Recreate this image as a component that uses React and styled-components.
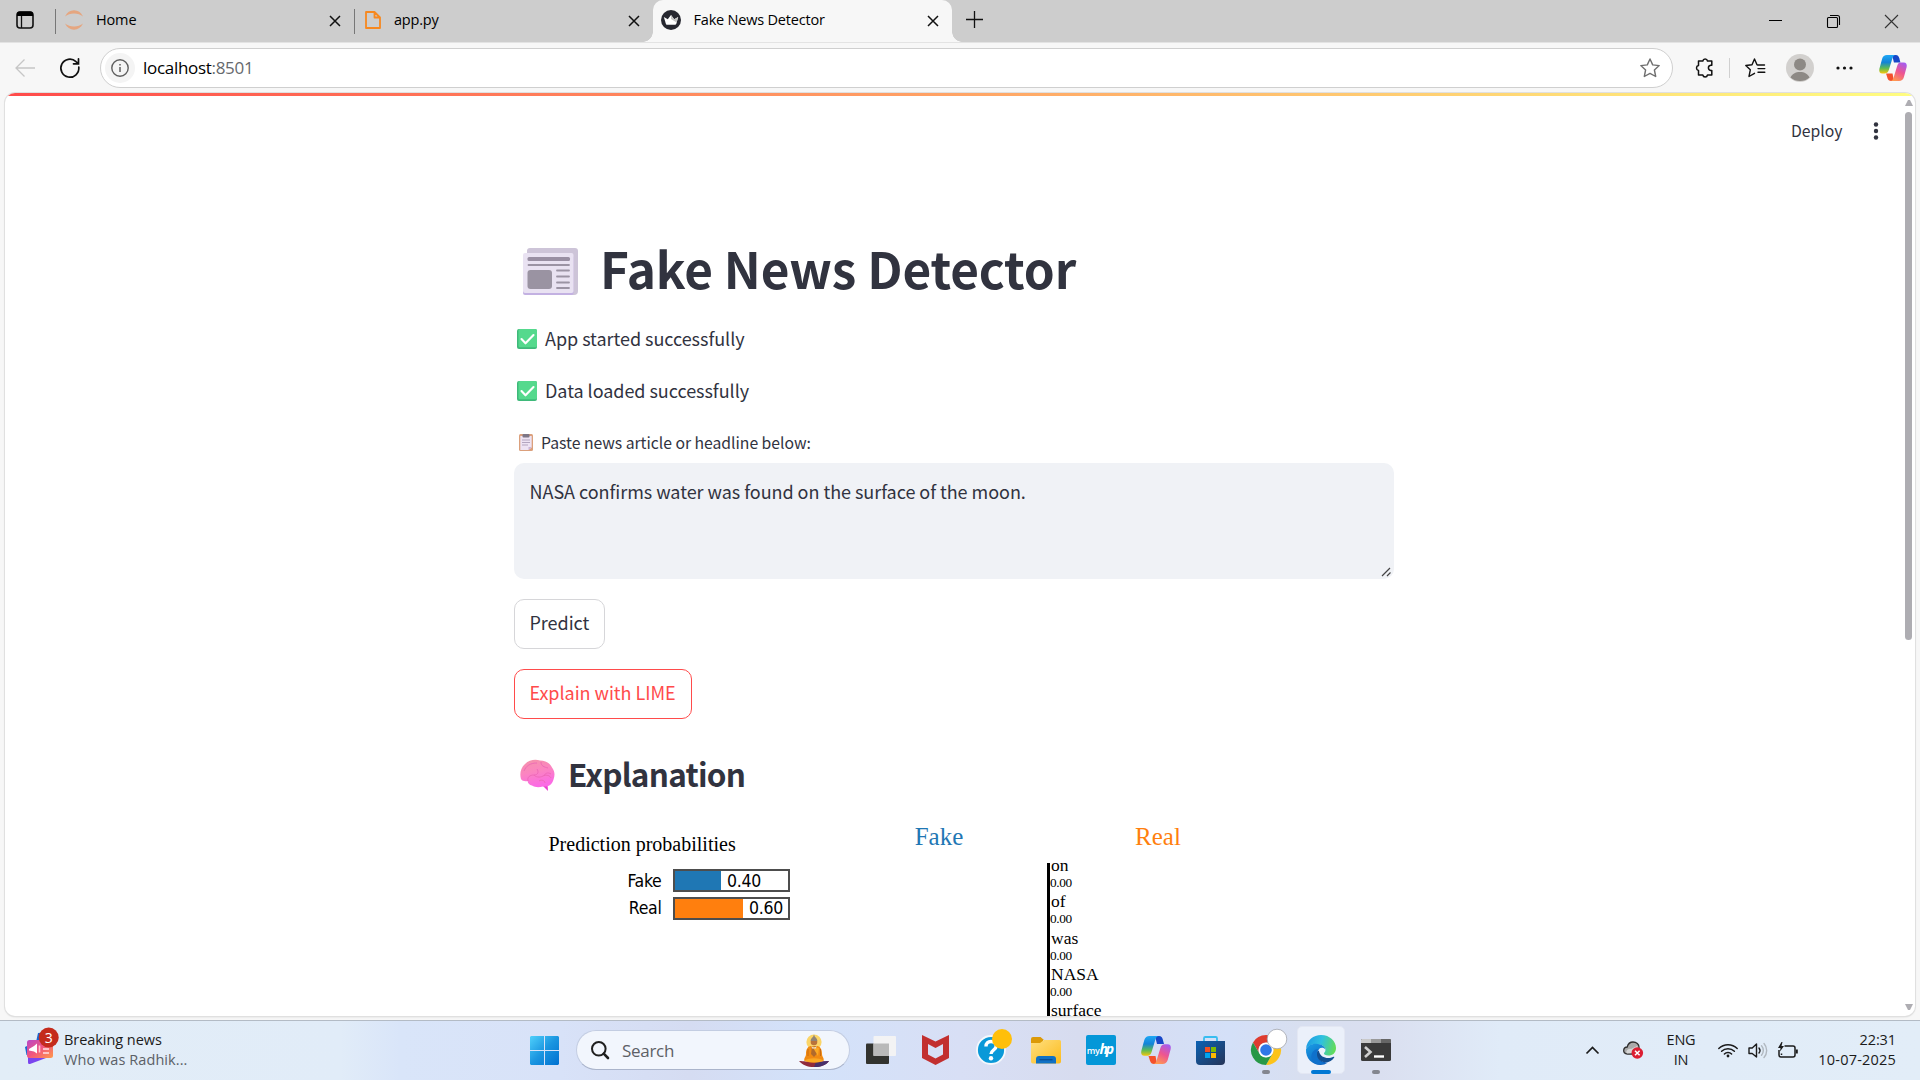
import React from "react";
import styled, { createGlobalStyle, css } from "styled-components";

const UI = `"Open Sans", "Noto Sans", sans-serif`;
const SOURCE = `"Noto Sans CJK SC", "Noto Sans", sans-serif`;
const TIMES = `"Liberation Serif", serif`;
const TAHOMA = `"DejaVu Sans Condensed", "DejaVu Sans", sans-serif`;

const Global = createGlobalStyle`
  * { box-sizing: border-box; }
  body { margin: 0; overflow: hidden; background: #f7f7f7; }
  svg { display: block; flex: none; overflow: visible; }
`;

const Screen = styled.div`
  width: 1920px;
  height: 1080px;
  display: flex;
  flex-direction: column;
  background: #f7f7f7;
  overflow: hidden;
`;

const Label = styled.span`
  font-family: ${UI};
  font-size: ${(p) => p.$size || 14.5}px;
  letter-spacing: ${(p) => p.$ls || 0}px;
  color: ${(p) => p.$color || "#000"};
  line-height: ${(p) => p.$lh || 20}px;
  white-space: nowrap;
`;

/* ---------- tab strip ---------- */
const TabStrip = styled.div`
  height: 42px;
  display: flex;
  background: #cdcdcd;
  padding-left: 16px;
`;
const TabMenu = styled.div`
  width: 40px;
  height: 40px;
  display: flex;
  align-items: center;
`;
const Tab = styled.div`
  width: ${(p) => p.$w}px;
  height: ${(p) => (p.$active ? 42 : 40)}px;
  padding: 0 ${(p) => p.$right}px ${(p) => (p.$active ? 2 : 0)}px ${(p) => p.$left}px;
  display: flex;
  align-items: center;
  position: relative;
  ${(p) =>
    p.$active
      ? css`
          background: #f7f7f7;
          border-radius: 10px 10px 0 0;
          &::before,
          &::after {
            content: "";
            position: absolute;
            bottom: 0;
            width: 10px;
            height: 10px;
          }
          &::before {
            left: -10px;
            background: radial-gradient(circle at 0 0, #cdcdcd 9.5px, #f7f7f7 10px);
          }
          &::after {
            right: -10px;
            background: radial-gradient(circle at 100% 0, #cdcdcd 9.5px, #f7f7f7 10px);
          }
        `
      : css`
          &::before {
            content: "";
            position: absolute;
            left: -1px;
            top: 9px;
            width: 1px;
            height: 25px;
            background: #777;
          }
        `}
`;
const TabTitle = styled(Label)`
  margin-left: ${(p) => p.$gap}px;
  flex: 1;
  padding-bottom: 1px;
`;
const TabClose = styled.div`
  padding-top: 2px;
`;
const NewTab = styled.div`
  width: 44px;
  height: 39px;
  display: flex;
  align-items: center;
  justify-content: center;
`;
const WindowControls = styled.div`
  margin-left: auto;
  display: flex;
  height: 42px;
`;
const WinButton = styled.div`
  width: 58px;
  display: flex;
  align-items: center;
  justify-content: center;
`;

/* ---------- toolbar ---------- */
const Toolbar = styled.div`
  height: 51px;
  flex: none;
  display: flex;
  align-items: center;
  padding: 0 13px 1px 15px;
  border-top: 1px solid #e3e3e3;
`;
const ReloadSlot = styled.div`
  margin: 0 20px 0 25px;
`;
const AddressBar = styled.div`
  width: 1573px;
  height: 40px;
  border: 1px solid #cfcfcf;
  border-radius: 20px;
  background: #fff;
  display: flex;
  align-items: center;
  padding: 0 12px 0 4px;
`;
const InfoBadge = styled.div`
  width: 30px;
  height: 30px;
  border-radius: 50%;
  background: #f4f4f4;
  display: flex;
  align-items: center;
  justify-content: center;
  margin-right: 8px;
`;
const Url = styled(Label)`
  flex: 1;
  i { font-style: normal; color: #66696d; }
`;
const ToolIcons = styled.div`
  display: flex;
  align-items: center;
  margin-left: auto;
`;
const ToolSlot = styled.div`
  margin-left: ${(p) => p.$ml}px;
`;
const Divider = styled.div`
  width: 1px;
  height: 20px;
  background: #d0d0d0;
  margin-left: 15px;
`;

/* ---------- page ---------- */
const Viewport = styled.div`
  margin: 0 5px;
  height: 923px;
  flex: none;
  background: #fff;
  border-radius: 10px;
  box-shadow: 0 0 0 1px #e0e0e0, 0 1px 2px rgba(0, 0, 0, 0.15);
  overflow: hidden;
  display: flex;
  flex-direction: column;
`;
const Decoration = styled.div`
  height: 3px;
  flex: none;
  background: linear-gradient(90deg, #ff4b4b, #fffd80);
`;
const PageRow = styled.div`
  display: flex;
  flex: 1;
  min-height: 0;
`;
const PageMain = styled.div`
  flex: 1;
  display: flex;
  flex-direction: column;
  min-width: 0;
`;
const AppHeader = styled.div`
  height: 70px;
  flex: none;
  display: flex;
  justify-content: flex-end;
  align-items: center;
  padding: 0 26px 0 0;
`;
const Deploy = styled.span`
  font-family: ${SOURCE};
  font-size: 15.75px;
  line-height: 22px;
  color: #31333f;
  margin-right: 31px;
`;
const Scrollbar = styled.div`
  width: 10px;
  margin-right: 1.5px;
  display: flex;
  flex-direction: column;
  align-items: center;
  padding: 4px 0 6px;
`;
const Thumb = styled.div`
  width: 7px;
  height: 528px;
  margin-top: 6px;
  border-radius: 4px;
  background: #aeadb2;
`;
const ScrollEnd = styled.div`
  margin-top: auto;
`;
const Content = styled.main`
  width: 880px;
  margin-left: 509px;
  padding-top: 77px;
  display: flex;
  flex-direction: column;
`;
const Title = styled.h1`
  margin: 0;
  height: 50px;
  display: flex;
  padding-left: 9px;
  font: 700 49.5px/50px ${SOURCE};
  letter-spacing: -0.15px;
  color: #31333f;
  white-space: nowrap;
  svg { margin: 5px 22px 0 0; }
`;
const Paragraph = styled.p`
  margin: ${(p) => p.$mt}px 0 0;
  height: 30px;
  padding-left: 3px;
  display: flex;
  font: 400 18px/30px ${SOURCE};
  letter-spacing: -0.04px;
  color: #31333f;
  svg { margin: 6px 8px 0 0; }
`;
const FieldLabel = styled.label`
  margin-top: 24px;
  height: 26px;
  padding-left: 5px;
  display: flex;
  font: 400 15.75px/28px ${SOURCE};
  letter-spacing: -0.03px;
  color: #31333f;
  svg { margin: 5px 8px 0 0; }
`;
const TextArea = styled.div`
  margin-top: 8px;
  height: 116px;
  border-radius: 10px;
  background: #f0f2f6;
  padding: 16px 2px 2px 15.5px;
  display: flex;
  justify-content: space-between;
  font: 400 18px/24px ${SOURCE};
  letter-spacing: -0.04px;
  color: #31333f;
  svg { align-self: flex-end; }
`;
const Button = styled.button`
  align-self: flex-start;
  width: ${(p) => p.$w}px;
  height: 50px;
  margin-top: 20px;
  padding: 0 0 4px 14.5px;
  text-align: left;
  border-radius: 10px;
  border: 1px solid ${(p) => (p.$hot ? "#ff4b4b" : "#d6d6d9")};
  background: #fff;
  color: ${(p) => (p.$hot ? "#ff4b4b" : "#31333f")};
  font: 400 18px/24px ${SOURCE};
  letter-spacing: -0.04px;
`;
const Subtitle = styled.h2`
  margin: 34px 0 0;
  height: 40px;
  padding-left: 6px;
  display: flex;
  font: 600 31.5px/41px ${SOURCE};
  letter-spacing: -0.75px;
  color: #31333f;
  svg { margin: 7px 12px 0 0; }
`;

/* ---------- explanation ---------- */
const Lime = styled.section`
  display: flex;
  padding-top: 29px;
  height: 223px;
  font-family: ${TIMES};
  color: #000;
`;
const Probabilities = styled.div`
  width: 315.5px;
  padding: 10px 0 0 34.5px;
`;
const ProbTitle = styled.div`
  font-size: 20px;
  line-height: 25px;
  margin-bottom: 12px;
`;
const ProbRow = styled.div`
  display: flex;
  align-items: center;
  height: 23px;
  margin-bottom: 4.5px;
  font-family: ${TAHOMA};
  font-size: 17.5px;
  letter-spacing: -0.3px;
`;
const ProbName = styled.span`
  width: 113px;
  margin-right: 11.5px;
  text-align: right;
`;
const ProbTrack = styled.div`
  width: 117px;
  height: 23px;
  border: 2px solid #4d4d4d;
  display: flex;
  align-items: center;
`;
const ProbFill = styled.div`
  height: 100%;
  background: ${(p) => p.$color};
  margin-right: 6px;
`;
const Weights = styled.div`
  display: grid;
  grid-template-columns: 219px 219px;
  grid-template-rows: 30px 1fr;
  row-gap: 11px;
`;
const ClassName = styled.div`
  text-align: center;
  font-size: 25px;
  line-height: 30px;
  color: ${(p) => p.$color};
`;
const FeatureList = styled.div`
  grid-column: 2;
  margin-left: -2px;
  border-left: 3px solid #000;
  overflow: hidden;
`;
const Feature = styled.div`
  height: 36.25px;
  &:first-child { margin-top: -8px; }
  b, span { display: block; font-weight: 400; }
  b { font-size: 17.5px; line-height: 20px; padding-left: 1.5px; }
  span { font-size: 13.3px; line-height: 16.25px; letter-spacing: -0.35px; padding-left: 0.5px; }
`;

/* ---------- taskbar ---------- */
const Taskbar = styled.div`
  margin-top: 4px;
  height: 60px;
  flex: none;
  border-top: 1px solid #b3bbc5;
  display: flex;
  background: linear-gradient(90deg, #e2edf7 0, #e1ecf8 340px, #d9e5f9 400px, #d8e2f8 560px, #d5dcf2 690px, #d3e2fa 810px, #d8dff5 960px, #d7dcef 1080px, #d4e0f8 1230px, #d8dff0 1300px, #dadff0 1380px, #e0ebf8 1500px, #e2edf8 1920px);
`;
const News = styled.div`
  width: 517px;
  padding: 6px 0 0 25px;
  display: flex;
`;
const NewsText = styled.div`
  display: flex;
  flex-direction: column;
  padding: 3px 0 0 11px;
`;
const Slot = styled.div`
  width: 55px;
  height: 59px;
  display: flex;
  align-items: center;
  justify-content: center;
  position: relative;
  padding-bottom: 1px;
  ${(p) =>
    p.$run &&
    css`
      &::after {
        content: "";
        position: absolute;
        bottom: 6px;
        width: ${p.$active ? 20 : 8}px;
        height: 4px;
        border-radius: 2px;
        background: ${p.$active ? "#0078d4" : "#83868f"};
      }
    `}
`;
const ActiveTile = styled.div`
  width: 48px;
  height: 48px;
  border-radius: 5px;
  background: #ebf0fa;
  border: 1px solid #e3e7f3;
  display: flex;
  align-items: center;
  justify-content: center;
`;
const SearchBox = styled.div`
  width: 274px;
  height: 40px;
  margin: 9px 3px 0 4px;
  border-radius: 20px;
  background: #f2f6fd;
  border: 1px solid #c3cde2;
  border-bottom-color: #aab4cb;
  display: flex;
  align-items: center;
  padding: 0 20px 0 14px;
`;
const SearchText = styled(Label)`
  flex: 1;
  margin-left: 13px;
  padding-top: 1px;
`;
const Tray = styled.div`
  margin-left: auto;
  display: flex;
  align-items: center;
  padding-right: 24px;
`;
const TraySlot = styled.div`
  margin-right: ${(p) => p.$mr}px;
  padding-bottom: 1px;
`;
const TrayText = styled.div`
  display: flex;
  flex-direction: column;
  align-items: ${(p) => p.$align};
  width: ${(p) => p.$w}px;
  margin-right: ${(p) => p.$mr || 0}px;
  padding-bottom: 1px;
`;

const Cross = ({ s = 10, w = 1.5, c = "#111" }) => (
  <svg width={s} height={s} viewBox={`0 0 ${s} ${s}`} stroke={c} strokeWidth={w}>
    <path d={`M0 0L${s} ${s}M${s} 0L0 ${s}`} />
  </svg>
);

const TabMenuIcon = () => (
  <svg width="18" height="18" viewBox="0 0 18 18">
    <rect x="1" y="1" width="16" height="16" rx="3" fill="none" stroke="#111" strokeWidth="1.6" />
    <path d="M1 5V3a2.5 2.5 0 012.500-2.500h11A2.500 2.500 0 0117 3v2z" fill="#000" />
    <path d="M5.500 5v12" stroke="#111" strokeWidth="1.300" />
  </svg>
);
const JupyterIcon = () => (
  <svg width="20" height="20" viewBox="0 0 20 20" fill="#e5a680">
    <path d="M1 6.500C3 2.500 6 .300 10 .300s7 2.200 9 6.200C16.500 4.600 13.500 3.600 10 3.600S3.500 4.600 1 6.500zM1 13.500c2 4 5 6.200 9 6.200s7-2.200 9-6.200c-2.500 1.900-5.500 2.900-9 2.900s-6.500-1-9-2.900z" />
  </svg>
);
const FileIcon = () => (
  <svg width="16" height="18" viewBox="0 0 16 18" fill="none" stroke="#f7881f" strokeWidth="1.800" strokeLinejoin="round">
    <path d="M1 1h8.500L15 6.500V17H1zM9.500 1v5.500H15" />
  </svg>
);
const CrownIcon = () => (
  <svg width="20" height="20" viewBox="0 0 20 20">
    <circle cx="10" cy="10" r="10" fill="#262730" />
    <path d="M2.800 7l4 2.300L10 5l3.200 4.300 4-2.300-2 7H5z" fill="#fff" />
    <path d="M10 5l3.200 4.300 4-2.300-1.600 5.500L10 9z" fill="#c4c4c4" />
    <path d="M4.700 12.500h10.600l-.6 2.200H5.300z" fill="#fff" />
  </svg>
);
const BackIcon = () => (
  <svg width="20" height="18" viewBox="0 0 20 18" fill="none" stroke="#c6c6c6" strokeWidth="1.300">
    <path d="M20 9H1M9.500 .500L1 9l8.500 8.500" />
  </svg>
);
const ReloadIcon = () => (
  <svg width="20" height="20" viewBox="0 0 20 20" fill="none" stroke="#111" strokeWidth="1.700" strokeLinecap="round">
    <path d="M18.800 9.200A9 9 0 1 1 16 3.600L18.500 5.800M18.500 .800v5h-5" />
  </svg>
);
const InfoIcon = () => (
  <svg width="18" height="18" viewBox="0 0 18 18" fill="none" stroke="#5f5f5f" strokeWidth="1.400">
    <circle cx="9" cy="9" r="8.200" />
    <path d="M9 8v5M9 5v1.600" strokeWidth="1.500" />
  </svg>
);
const StarIcon = () => (
  <svg width="20" height="20" viewBox="0 0 20 20" fill="none" stroke="#6f6f6f" strokeWidth="1.400" strokeLinejoin="round">
    <path d="M10 1l2.700 5.900 6.500.700-4.800 4.400 1.300 6.500L10 15.400l-5.700 3.100L5.600 12 .800 7.600l6.500-.700z" />
  </svg>
);
const PuzzleIcon = () => (
  <svg width="19" height="20" viewBox="0 0 19 20" fill="none" stroke="#111" strokeWidth="1.500" strokeLinejoin="round">
    <path d="M7.800 3a2.400 2.400 0 014.700 0h4.300v4.200h-1.200a2.700 2.700 0 000 5.300h1.200V17h-4.300a2.400 2.400 0 01-4.700 0H3.500v-4.600a2.500 2.500 0 010-4.900V3z" />
  </svg>
);
const FavoritesIcon = () => (
  <svg width="20" height="20" viewBox="0 0 20 20" fill="none" stroke="#111" strokeWidth="1.400" strokeLinejoin="round" strokeLinecap="round">
    <path d="M14.500 6.900l-2.500-.200L9.500 1 7 6.700l-6.200.800 4.500 4.300L4 18.500l5.500-3.200M12.500 7h7M13 10.600h6.800M13 14.200h6.800" />
  </svg>
);
const Avatar = () => (
  <svg width="28" height="28" viewBox="0 0 28 28">
    <circle cx="14" cy="14" r="14" fill="#d2d0ce" />
    <circle cx="14" cy="10.500" r="6" fill="#8d8985" />
    <path d="M4.500 23.500C6 20 9.500 18 14 18s8 2 9.500 5.500A14 14 0 0114 27a14 14 0 01-9.500-3.500z" fill="#8d8985" />
  </svg>
);
const Dots = ({ vertical }) =>
  vertical ? (
    <svg width="4" height="18" viewBox="0 0 4 18" fill="#31333f">
      <circle cx="2" cy="2.500" r="2.200" /><circle cx="2" cy="9" r="2.200" /><circle cx="2" cy="15.500" r="2.200" />
    </svg>
  ) : (
    <svg width="17" height="4" viewBox="0 0 17 4" fill="#111">
      <circle cx="2" cy="2" r="1.600" /><circle cx="8.500" cy="2" r="1.600" /><circle cx="15" cy="2" r="1.600" />
    </svg>
  );
const CopilotIcon = ({ id, w, h }) => (
  <svg width={w} height={h} viewBox="0 0 30 28">
    <defs>
      <linearGradient id={`${id}a`} x1="0" y1="0" x2="0" y2="1">
        <stop offset="0" stopColor="#1fa8f5" /><stop offset=".4" stopColor="#1283d8" /><stop offset=".72" stopColor="#5dbb54" /><stop offset="1" stopColor="#f5c60c" />
      </linearGradient>
      <linearGradient id={`${id}b`} x1="0.800" y1="0" x2="0.300" y2="1">
        <stop offset="0" stopColor="#a45cf0" /><stop offset=".5" stopColor="#ee5590" /><stop offset="1" stopColor="#ff9a50" />
      </linearGradient>
    </defs>
    <path d="M14 0h4c2.300 0 3.200 1.500 3.800 3.500L23 8h-7z" fill="#1747c8" />
    <path d="M7.500 20h7L16 28h-3c-2.200 0-3.200-1-3.900-3z" fill="#f4502c" />
    <path d="M8.500 0H18c-2 0-3 1.500-3.600 3.500L10.600 16c-.8 2.600-2 3.800-4.200 3.800H3.500C.800 19.800-.300 17.800.300 15L3.300 4C4.200 1.300 5.800 0 8.500 0z" fill={`url(#${id}a)`} />
    <path d="M21.500 28H12c2 0 3-1.500 3.600-3.500L19.400 12c.8-2.600 2-3.800 4.200-3.800h2.900c2.700 0 3.800 2 3.200 4.800l-3 11c-.9 2.700-2.500 4-5.200 4z" fill={`url(#${id}b)`} />
  </svg>
);

const NewspaperEmoji = () => (
  <svg width="55" height="47" viewBox="0 0 55 47">
    <path d="M7 0h45a3 3 0 013 3v40a4 4 0 01-4 4H8V6L4 5V3a3 3 0 013-3z" fill="#cdc4d8" />
    <rect x="0" y="8" width="50.500" height="39" rx="2" fill="#c3b1e2" />
    <rect x="0" y="5" width="50.500" height="40" rx="2" fill="#e9e2f2" />
    <rect x="4.500" y="9" width="42.500" height="4" rx="1.500" fill="#998fa3" />
    <path d="M5.500 17h40.500M34 22.500h12M34 28.500h12M34 34.500h12M34 40h12" stroke="#9b93a4" strokeWidth="1.800" strokeLinecap="round" />
    <rect x="4.500" y="22" width="24.500" height="19" rx="3" fill="#9a93a2" />
  </svg>
);
const CheckEmoji = () => (
  <svg width="20" height="20" viewBox="0 0 20 20">
    <rect width="20" height="20" rx="2" fill="#3fb97a" />
    <rect x="1.500" width="18.500" height="18.300" rx="1.500" fill="#55d98d" />
    <path d="M4.500 10l4 4.300 8-8.300" fill="none" stroke="#fff" strokeWidth="2.100" strokeLinecap="round" strokeLinejoin="round" />
  </svg>
);
const ClipboardEmoji = () => (
  <svg width="14" height="17" viewBox="0 0 14 17">
    <rect width="14" height="17" rx="1.500" fill="#dba07c" />
    <path d="M1.300 2h11.400v11.500L9.500 16H1.300z" fill="#eee3f3" />
    <path d="M9.500 16v-3h3.200z" fill="#c9b4d8" />
    <rect x="3.500" y="0" width="7" height="3.600" rx="1" fill="#7d7686" />
    <path d="M3 6h8M3 8.500h8M3 11h6" stroke="#b3a5bf" strokeWidth="1" />
  </svg>
);
const BrainEmoji = () => (
  <svg width="36" height="31" viewBox="0 0 36 31">
    <defs>
      <linearGradient id="brain" x1="0" y1="0" x2=".3" y2="1">
        <stop offset="0" stopColor="#f394a8" /><stop offset=".5" stopColor="#fb85c0" /><stop offset="1" stopColor="#fb6be4" />
      </linearGradient>
    </defs>
    <path d="M21 24l7 7-.5-7z" fill="#ea3fd0" />
    <path d="M1 19C-.5 14 .500 8 5 4c4-4 10-5 15-3.500 6 0 10 3 12 7 3 4 3 8 1.500 12C32 25 28 27 23 26.500c-4 1-8 1-11-1-2.500-.500-4-2-4.500-4.500C5 21.500 2 21 1 19z" fill="url(#brain)" />
    <path d="M4 11c2-5 6-8 13-8M8 21c-1-4 2-6 6-6s5-3 3-6M21 2c0 4 3 5 7 6M14 15c2 2 5 3 9 1s7 0 8 2M19 21c3-2 6 0 6 2M24 16c1-3 4-4 7-2" fill="none" stroke="#ec68b6" strokeWidth=".9" />
  </svg>
);

const NewsIcon = () => (
  <svg width="28" height="37" viewBox="0 0 28 37">
    <defs>
      <linearGradient id="news" x1="0" y1="0" x2="1" y2="1">
        <stop offset="0" stopColor="#b848c8" /><stop offset=".5" stopColor="#f2567d" /><stop offset="1" stopColor="#ff9a4a" />
      </linearGradient>
    </defs>
    <path d="M13 6l9-1v10H11zM0 20l4-2 1 10H1.500z" fill="#1b66d0" />
    <path d="M3 30l18 1-16 6c-1.500.300-2-.500-2-2z" fill="#7a45ee" />
    <rect x="2" y="13" width="26" height="18" rx="2.500" fill="url(#news)" />
    <path d="M4 22l5-3 3-2.500v10l-3-2-5-1z" fill="#fff" />
    <path d="M14.500 18.500v7" stroke="#ffc3d0" strokeWidth="1.600" />
    <path d="M18 22h6M18 26h6" stroke="#ffe0e4" strokeWidth="1.600" />
    <circle cx="23.700" cy="10.500" r="10" fill="#c42b1c" />
    <text x="23.700" y="15.500" fontSize="14" fontFamily="Open Sans" textAnchor="middle" fill="#fff">3</text>
  </svg>
);
const WindowsIcon = () => (
  <svg width="29" height="29" viewBox="0 0 29 29">
    <defs>
      <linearGradient id="win" gradientUnits="userSpaceOnUse" x1="0" y1="0" x2="29" y2="29">
        <stop offset="0" stopColor="#4fd0fb" /><stop offset=".5" stopColor="#1a95e0" /><stop offset="1" stopColor="#0070d0" />
      </linearGradient>
    </defs>
    <path d="M1 0h13v14H0V1zM15 0h13l1 1v13H15zM0 15h14v14H1l-1-1zM15 15h14v13l-1 1H15z" fill="url(#win)" />
  </svg>
);
const SearchIcon = () => (
  <svg width="18" height="18" viewBox="0 0 18 18" fill="none" stroke="#1f1f1f" strokeWidth="2">
    <circle cx="7.800" cy="7.800" r="6.800" />
    <path d="M12.700 12.700L17 17" strokeWidth="2.600" strokeLinecap="round" />
  </svg>
);
const BuddhaIcon = () => (
  <svg width="30" height="33" viewBox="0 0 30 33">
    <circle cx="15" cy="8" r="7.600" fill="#fbd568" />
    <path d="M0 27c5 0 8 1 15 1s10-1 15-1c-3 4-8 6-15 6S4 31 0 27z" fill="#8f2a3c" />
    <path d="M15 33c7 0 12-2 15-6-5 0-8 1-13 1z" fill="#46306b" />
    <path d="M11.500 12c-3.500 1-4.500 4-4.500 8 0 3-2.500 4-1.500 7 6 2 13 2 19 0 1-3-1.500-4-1.500-7 0-4-1-7-4.500-8z" fill="#f08a12" />
    <path d="M13 12h4l1.500 7-3.500 4-3-3z" fill="#b06a2c" />
    <path d="M13 12l6 10 1-8zM5.500 26.500c5-3 14-3 19 0-5 2.500-14 2.500-19 0z" fill="#fba924" />
    <path d="M9 15v7M21.500 15v7" stroke="#c96a10" strokeWidth="1" />
    <circle cx="15" cy="8" r="3.300" fill="#b9733a" />
    <path d="M12 9c.500 6 5.500 6 6 0l-1 5.500h-4z" fill="#e6ddd4" />
    <path d="M11.700 7c0-2 1.300-3.500 2.300-4L15 .500l1 2.500c1 .500 2.300 2 2.300 4z" fill="#8f8378" />
  </svg>
);
const TaskViewIcon = () => (
  <svg width="30" height="28" viewBox="0 0 30 28">
    <rect x="0" y="7.500" width="23" height="20.500" rx="1" fill="#32332f" />
    <rect x="7.500" y="0" width="22.500" height="20" rx="1" fill="#f3f3f4" />
    <rect x="7.500" y="7.500" width="15.500" height="12.500" fill="#b9b9b9" />
  </svg>
);
const McAfeeIcon = () => (
  <svg width="27" height="30" viewBox="0 0 27 30">
    <path d="M0 0l13.500 6.500L27 0v23l-13.500 7L0 23zM6 9v10.500l7.500 4 7.500-4V9l-7.500 4z" fill="#c22f2f" fillRule="evenodd" />
  </svg>
);
const HelpIcon = () => (
  <svg width="30" height="30" viewBox="0 0 30 30">
    <circle cx="15" cy="15" r="14" fill="#0a99d8" stroke="#f4f8fc" strokeWidth="1.800" />
    <path d="M10 11.500c0-3.500 2-5 5-5s5.200 1.800 5.200 4.500c0 4-5.200 4-5.200 8" fill="none" stroke="#fff" strokeWidth="3.400" />
    <circle cx="15" cy="23.300" r="2.200" fill="#fff" />
    <circle cx="26" cy="4" r="10" fill="#ffbf0a" />
  </svg>
);
const FolderIcon = () => (
  <svg width="30" height="27" viewBox="0 0 30 27">
    <defs>
      <linearGradient id="folder" x1="0" y1="0" x2="1" y2="1">
        <stop offset="0" stopColor="#ffdf80" /><stop offset="1" stopColor="#fcbb1c" />
      </linearGradient>
    </defs>
    <path d="M0 2a2 2 0 012-2h7.500l3.500 3h-1v5H0z" fill="#dc9a08" />
    <path d="M0 6h9l4-3h15.500A1.500 1.500 0 0130 4.500v20a2 2 0 01-2 2H2a2 2 0 01-2-2z" fill="url(#folder)" />
    <path d="M5 26.500V22a3 3 0 013-3h14a3 3 0 013 3v4.500z" fill="#1071c4" />
    <path d="M8.500 22.700h13" stroke="#0a4d94" strokeWidth="1.300" />
  </svg>
);
const MyHp = styled.div`
  width: 30px;
  height: 30px;
  border-radius: 2px;
  background: #0497d8;
  color: #fff;
  display: flex;
  align-items: baseline;
  justify-content: center;
  font-family: ${UI};
  font-size: 9px;
  font-weight: 600;
  line-height: 28px;
  letter-spacing: -0.4px;
  em { font-size: 14px; font-weight: 700; letter-spacing: -2px; padding-right: 2px; }
`;
const StoreIcon = () => (
  <svg width="29" height="29" viewBox="0 0 29 29">
    <defs>
      <linearGradient id="store" x1="0" y1="0" x2="1" y2="1">
        <stop offset="0" stopColor="#0b62b4" /><stop offset="1" stopColor="#263457" />
      </linearGradient>
    </defs>
    <path d="M8 6V2.200C8 1.400 8.400 1 9.200 1h10.600c.8 0 1.200.400 1.200 1.200V6" fill="none" stroke="#38bdf0" strokeWidth="1.800" />
    <path d="M0 5h29v20a4 4 0 01-4 4H4a4 4 0 01-4-4z" fill="url(#store)" />
    <path d="M9 11h5v5H9z" fill="#f25022" /><path d="M15 11h5v5h-5z" fill="#7fba00" />
    <path d="M9 17h5v5H9z" fill="#00a4ef" /><path d="M15 17h5v5h-5z" fill="#ffb900" />
  </svg>
);
const ChromeIcon = () => (
  <svg width="30" height="30" viewBox="0 0 30 30">
    <path d="M2 7.500A15 15 0 0128 7.500H15a7.500 7.500 0 00-6.500 11.250z" fill="#de3b2f" />
    <path d="M28 7.500A15 15 0 0115 30l6.500-11.250A7.500 7.500 0 0015 7.500z" fill="#fcc31a" />
    <path d="M15 30A15 15 0 012 7.500l6.500 11.250A7.500 7.500 0 0021.500 18.750z" fill="#279847" />
    <circle cx="15" cy="15" r="7.300" fill="#fff" /><circle cx="15" cy="15" r="5.800" fill="#2f77e8" />
    <circle cx="26" cy="4" r="9.800" fill="#fff" stroke="#a3a6ad" strokeWidth=".8" />
  </svg>
);
const EdgeIcon = () => (
  <svg width="30" height="30" viewBox="0 0 30 30">
    <defs>
      <linearGradient id="edgeTop" x1="0" y1=".3" x2="1" y2=".5">
        <stop offset="0" stopColor="#1d9be4" /><stop offset=".5" stopColor="#2fc1df" /><stop offset="1" stopColor="#62dc58" />
      </linearGradient>
      <linearGradient id="edgeLow" x1="0" y1="0" x2=".6" y2="1">
        <stop offset="0" stopColor="#1a9fe6" /><stop offset="1" stopColor="#0c62c0" />
      </linearGradient>
    </defs>
    <path d="M0 13.500C1 5 7.500 0 15 0c9 0 15 6.500 15 13 0 5-3.500 7.500-7.500 7.500-3 0-5-1-4.500-2.500 1-1 1.500-2 1.500-3.500 0-3-4-5.500-9-5.500-5.500 0-9 2.500-10.500 4.500z" fill="url(#edgeTop)" />
    <path d="M0 14.500C1 11 5 8.700 10 8.700c5.500 0 9.500 3 9.500 6-1.500-2.200-4.500-2.500-6.500-.700-3 3-2 8.500 2 11.500 2 1.500 5 2 7 2-2.500 1.700-5 2.500-7.500 2.500C6 30-.500 23 0 14.500z" fill="url(#edgeLow)" />
    <path d="M11.500 16c-2 5 1 10 6 11 4.500 1 8.500-1 10.700-4.500.3-.600-.200-1-.700-.700-5 2.500-13 1.500-14.500-5.500-.200-.800-1-1.300-1.500-.300z" fill="#124f93" />
    <path d="M13 14c-3 2-3.500 8 0 11.500 1.500 1.500 4 2.500 6 2.500-4 2.500-12 2-13.500-5C4.700 19 7 14 13 14z" fill="#0f71cc" />
  </svg>
);
const TerminalIcon = () => (
  <svg width="30" height="22" viewBox="0 0 30 22">
    <rect width="30" height="22" rx="1.500" fill="#3a3a3a" />
    <path d="M1 0h9v4H0V1z" fill="#c9c9c9" /><path d="M10 0h10v4H10z" fill="#999" /><path d="M20 0h9l1 1v3H20z" fill="#666" />
    <path d="M4 8l5.500 5L4 18" fill="none" stroke="#cfcfcf" strokeWidth="2.600" />
    <path d="M13 17.500h10" stroke="#fff" strokeWidth="2.400" />
  </svg>
);
const ChevronIcon = () => (
  <svg width="13" height="7" viewBox="0 0 13 7" fill="none" stroke="#1b1b1b" strokeWidth="1.700">
    <path d="M.500 6.500l6-6 6 6" />
  </svg>
);
const CloudIcon = () => (
  <svg width="20" height="18" viewBox="0 0 20 18">
    <path d="M4.500 13C1.500 13 .500 11 .700 9c.3-2 2-3 3.500-3C5 3 7 1 10 1c3.500 0 6 2.500 6 5v5l-5 2z" fill="#aaa" stroke="#2f2f2f" strokeWidth="1.300" />
    <path d="M4 12.500C2 11 5 7 8 8l6-3 2 3-3 4z" fill="#d6d6d6" />
    <circle cx="14.300" cy="12" r="5.800" fill="#dc1e32" />
    <path d="M12 9.700l4.600 4.600M16.600 9.700L12 14.300" stroke="#fff" strokeWidth="1.500" />
  </svg>
);
const WifiIcon = () => (
  <svg width="20" height="15" viewBox="0 0 20 15" fill="none" stroke="#1b1b1b" strokeWidth="1.500" strokeLinecap="round">
    <path d="M.800 5.500a13 13 0 0118.400 0M3.600 8.300a9 9 0 0112.800 0M6.400 11a5 5 0 017.200 0" />
    <circle cx="10" cy="13" r="1.400" fill="#1b1b1b" stroke="none" />
  </svg>
);
const SpeakerIcon = () => (
  <svg width="20" height="17" viewBox="0 0 20 17" fill="none" stroke="#1b1b1b" strokeWidth="1.400" strokeLinecap="round" strokeLinejoin="round">
    <path d="M1 6h3.200L8.500 2v13L4.200 11.500H1zM11 6a4 4 0 010 5" />
    <path d="M13.500 3.800a7 7 0 010 9.400M16 1.500a10.500 10.500 0 010 14" stroke="#b0b7bf" />
  </svg>
);
const BatteryIcon = () => (
  <svg width="20" height="17" viewBox="0 0 20 17" fill="none" stroke="#1b1b1b" strokeWidth="1.500">
    <path d="M6.500 4H15a2 2 0 012 2v7a2 2 0 01-2 2H3a2 2 0 01-2-2V8" />
    <path d="M18.800 7.500v4" strokeWidth="2" />
    <path d="M3.500 0L0 6h2.500L2 9.500 6 4H3.500L4.500 0z" fill="#1b1b1b" stroke="none" />
    <path d="M3.500 11.500v1.500" />
  </svg>
);
const Arrow = ({ down }) => (
  <svg width="8" height="6" viewBox="0 0 8 6" fill="#aeadb2">
    <path d={down ? "M0 0h8L5 6H3z" : "M0 6h8L5 0H3z"} />
  </svg>
);

const features = [
  { word: "on", weight: "0.00" },
  { word: "of", weight: "0.00" },
  { word: "was", weight: "0.00" },
  { word: "NASA", weight: "0.00" },
  { word: "surface" },
];
const probabilities = [
  { name: "Fake", value: 0.4, fill: 46, color: "#1f77b4" },
  { name: "Real", value: 0.6, fill: 68, color: "#ff7f0e" },
];

function BrowserTabs() {
  return (
    <TabStrip>
      <TabMenu><TabMenuIcon /></TabMenu>
      <Tab $w={299} $left={8} $right={15}>
        <JupyterIcon />
        <TabTitle $gap={12} $ls={-0.15}>Home</TabTitle>
        <TabClose><Cross /></TabClose>
      </Tab>
      <Tab $w={298} $left={10} $right={14}>
        <FileIcon />
        <TabTitle $gap={13} $ls={-0.2}>app.py</TabTitle>
        <TabClose><Cross /></TabClose>
      </Tab>
      <Tab $w={299} $left={8} $right={14} $active>
        <CrownIcon />
        <TabTitle $gap={12.5} $ls={-0.2}>Fake News Detector</TabTitle>
        <TabClose><Cross /></TabClose>
      </Tab>
      <NewTab>
        <svg width="17" height="17" viewBox="0 0 17 17" stroke="#111" strokeWidth="1.300"><path d="M0 8.500h17M8.500 0v17" /></svg>
      </NewTab>
      <WindowControls>
        <WinButton><svg width="13" height="2"><path d="M0 .500h13" stroke="#000" /></svg></WinButton>
        <WinButton>
          <svg width="13" height="13" viewBox="0 0 13 13" fill="none" stroke="#000" strokeWidth="1.100">
            <rect x=".5" y="2.500" width="10" height="10" rx="1" /><path d="M3 .500h7.500a2 2 0 012 2V10" />
          </svg>
        </WinButton>
        <WinButton><Cross s={13} w={1.1} c="#333" /></WinButton>
      </WindowControls>
    </TabStrip>
  );
}

function BrowserToolbar() {
  return (
    <Toolbar>
      <BackIcon />
      <ReloadSlot><ReloadIcon /></ReloadSlot>
      <AddressBar>
        <InfoBadge><InfoIcon /></InfoBadge>
        <Url $size={17} $ls={-0.3}>localhost<i>:8501</i></Url>
        <StarIcon />
      </AddressBar>
      <ToolIcons>
        <ToolSlot $ml={0}><PuzzleIcon /></ToolSlot>
        <Divider />
        <ToolSlot $ml={15}><FavoritesIcon /></ToolSlot>
        <ToolSlot $ml={21}><Avatar /></ToolSlot>
        <ToolSlot $ml={22}><Dots /></ToolSlot>
        <ToolSlot $ml={26}><CopilotIcon id="cpt" w={28} h={26} /></ToolSlot>
      </ToolIcons>
    </Toolbar>
  );
}

function DetectorPage() {
  return (
    <Viewport>
      <Decoration />
      <PageRow>
        <PageMain>
          <AppHeader>
            <Deploy>Deploy</Deploy>
            <Dots vertical />
          </AppHeader>
          <Content>
            <Title><NewspaperEmoji />Fake News Detector</Title>
            <Paragraph $mt={30}><CheckEmoji />App started successfully</Paragraph>
            <Paragraph $mt={22}><CheckEmoji />Data loaded successfully</Paragraph>
            <FieldLabel><ClipboardEmoji />Paste news article or headline below:</FieldLabel>
            <TextArea>
              NASA confirms water was found on the surface of the moon.
              <svg width="10" height="10" viewBox="0 0 10 10" stroke="#444" strokeWidth="1.200"><path d="M0 9l8-8M5 9l3.500-3.500" /></svg>
            </TextArea>
            <Button $w={91}>Predict</Button>
            <Button $w={178} $hot>Explain with LIME</Button>
            <Subtitle><BrainEmoji />Explanation</Subtitle>
            <Lime>
              <Probabilities>
                <ProbTitle>Prediction probabilities</ProbTitle>
                {probabilities.map((p) => (
                  <ProbRow key={p.name}>
                    <ProbName>{p.name}</ProbName>
                    <ProbTrack>
                      <ProbFill $color={p.color} style={{ width: p.fill }} />
                      {p.value.toFixed(2)}
                    </ProbTrack>
                  </ProbRow>
                ))}
              </Probabilities>
              <Weights>
                <ClassName $color="#1f77b4">Fake</ClassName>
                <ClassName $color="#ff7f0e">Real</ClassName>
                <FeatureList>
                  {features.map((f) => (
                    <Feature key={f.word}>
                      <b>{f.word}</b>
                      {f.weight && <span>{f.weight}</span>}
                    </Feature>
                  ))}
                </FeatureList>
              </Weights>
            </Lime>
          </Content>
        </PageMain>
        <Scrollbar>
          <Arrow />
          <Thumb />
          <ScrollEnd><Arrow down /></ScrollEnd>
        </Scrollbar>
      </PageRow>
    </Viewport>
  );
}

function WindowsTaskbar() {
  return (
    <Taskbar>
      <News>
        <NewsIcon />
        <NewsText>
          <Label $color="#1b1b1b" $ls={-0.05}>Breaking news</Label>
          <Label $color="#5b6066" $ls={0.07}>Who was Radhik...</Label>
        </NewsText>
      </News>
      <Slot><WindowsIcon /></Slot>
      <SearchBox>
        <SearchIcon />
        <SearchText $size={17} $ls={-0.3} $color="#5d6066">Search</SearchText>
        <BuddhaIcon />
      </SearchBox>
      <Slot><TaskViewIcon /></Slot>
      <Slot><McAfeeIcon /></Slot>
      <Slot><HelpIcon /></Slot>
      <Slot><FolderIcon /></Slot>
      <Slot><MyHp>my<em>hp</em></MyHp></Slot>
      <Slot><CopilotIcon id="cpb" w={30} h={28} /></Slot>
      <Slot><StoreIcon /></Slot>
      <Slot $run><ChromeIcon /></Slot>
      <Slot $run $active><ActiveTile><EdgeIcon /></ActiveTile></Slot>
      <Slot $run><TerminalIcon /></Slot>
      <Tray>
        <TraySlot $mr={24}><ChevronIcon /></TraySlot>
        <TraySlot $mr={22}><CloudIcon /></TraySlot>
        <TrayText $align="center" $w={32} $mr={21}>
          <Label $color="#1b1b1b" $ls={-0.2}>ENG</Label>
          <Label $color="#1b1b1b" $ls={-0.3}>IN</Label>
        </TrayText>
        <TraySlot $mr={10}><WifiIcon /></TraySlot>
        <TraySlot $mr={10}><SpeakerIcon /></TraySlot>
        <TraySlot $mr={20}><BatteryIcon /></TraySlot>
        <TrayText $align="flex-end" $w={78}>
          <Label $color="#1b1b1b" $ls={-0.1}>22:31</Label>
          <Label $color="#1b1b1b" $ls={0.2}>10-07-2025</Label>
        </TrayText>
      </Tray>
    </Taskbar>
  );
}

export default function App() {
  return (
    <Screen>
      <Global />
      <BrowserTabs />
      <BrowserToolbar />
      <DetectorPage />
      <WindowsTaskbar />
    </Screen>
  );
}
